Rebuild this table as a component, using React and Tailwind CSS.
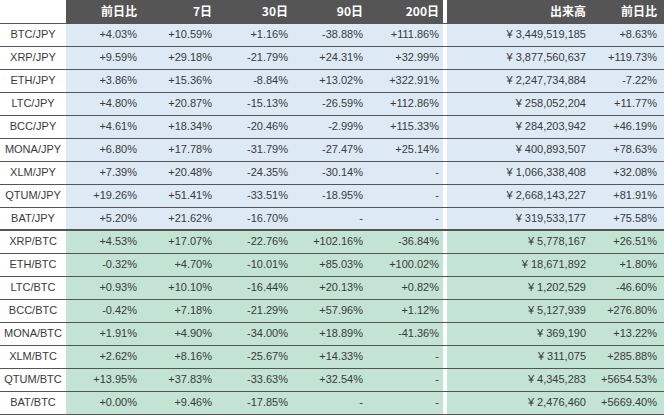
import React from 'react';

const jpyRows = [
  ['BTC/JPY', '+4.03%', '+10.59%', '+1.16%', '-38.88%', '+111.86%', '¥ 3,449,519,185', '+8.63%'],
  ['XRP/JPY', '+9.59%', '+29.18%', '-21.79%', '+24.31%', '+32.99%', '¥ 3,877,560,637', '+119.73%'],
  ['ETH/JPY', '+3.86%', '+15.36%', '-8.84%', '+13.02%', '+322.91%', '¥ 2,247,734,884', '-7.22%'],
  ['LTC/JPY', '+4.80%', '+20.87%', '-15.13%', '-26.59%', '+112.86%', '¥ 258,052,204', '+11.77%'],
  ['BCC/JPY', '+4.61%', '+18.34%', '-20.46%', '-2.99%', '+115.33%', '¥ 284,203,942', '+46.19%'],
  ['MONA/JPY', '+6.80%', '+17.78%', '-31.79%', '-27.47%', '+25.14%', '¥ 400,893,507', '+78.63%'],
  ['XLM/JPY', '+7.39%', '+20.48%', '-24.35%', '-30.14%', '-', '¥ 1,066,338,408', '+32.08%'],
  ['QTUM/JPY', '+19.26%', '+51.41%', '-33.51%', '-18.95%', '-', '¥ 2,668,143,227', '+81.91%'],
  ['BAT/JPY', '+5.20%', '+21.62%', '-16.70%', '-', '-', '¥ 319,533,177', '+75.58%'],
];

const btcRows = [
  ['XRP/BTC', '+4.53%', '+17.07%', '-22.76%', '+102.16%', '-36.84%', '¥ 5,778,167', '+26.51%'],
  ['ETH/BTC', '-0.32%', '+4.70%', '-10.01%', '+85.03%', '+100.02%', '¥ 18,671,892', '+1.80%'],
  ['LTC/BTC', '+0.93%', '+10.10%', '-16.44%', '+20.13%', '+0.82%', '¥ 1,202,529', '-46.60%'],
  ['BCC/BTC', '-0.42%', '+7.18%', '-21.29%', '+57.96%', '+1.12%', '¥ 5,127,939', '+276.80%'],
  ['MONA/BTC', '+1.91%', '+4.90%', '-34.00%', '+18.89%', '-41.36%', '¥ 369,190', '+13.22%'],
  ['XLM/BTC', '+2.62%', '+8.16%', '-25.67%', '+14.33%', '-', '¥ 311,075', '+285.88%'],
  ['QTUM/BTC', '+13.95%', '+37.83%', '-33.63%', '+32.54%', '-', '¥ 4,345,283', '+5654.53%'],
  ['BAT/BTC', '+0.00%', '+9.46%', '-17.85%', '-', '-', '¥ 2,476,460', '+5669.40%'],
];

const headers = ['前日比', '7日', '30日', '90日', '200日'];

function Row({ row, bg, last }) {
  const [pair, d1, d7, d30, d90, d200, vol, volChg] = row;
  const cell = `${bg} h-[23px] p-0 text-right align-middle`;
  return (
    <tr className={last ? 'border-b-2 border-[#555]' : 'border-b border-[#555]'}>
      <td className="h-[23px] p-0 bg-white text-center align-middle">{pair}</td>
      {[d1, d7, d30, d90, d200].map((v, i) => (
        <td key={i} className={`${cell} pr-[4px]`}>{v}</td>
      ))}
      <td className="bg-white p-0" />
      <td className={`${cell} pr-[5px]`}>{vol}</td>
      <td className={`${cell} pr-[7px]`}>{volChg}</td>
    </tr>
  );
}

export default function App() {
  return (
    <div className="w-[664px] h-[415px] bg-white overflow-hidden">
      <table
        className="w-[664px] table-fixed border-collapse text-[11px] leading-none text-[#3a3a3a]"
        style={{ fontFamily: '"Liberation Sans", "Noto Sans CJK JP", sans-serif' }}
      >
        <colgroup>
          <col className="w-[66px]" />
          <col className="w-[75px]" />
          <col className="w-[75px]" />
          <col className="w-[76px]" />
          <col className="w-[75px]" />
          <col className="w-[76px]" />
          <col className="w-[4px]" />
          <col className="w-[144px]" />
          <col className="w-[73px]" />
        </colgroup>
        <thead>
          <tr className="border-b border-[#555] text-[12px] font-bold text-white">
            <th className="h-[23px] p-0 bg-white" />
            {headers.map((h) => (
              <th
                key={h}
                className="h-[23px] p-0 pr-[4px] bg-[#555555] text-right align-middle font-bold"
                style={{ fontFamily: '"Noto Sans CJK JP", sans-serif' }}
              >
                {h}
              </th>
            ))}
            <th className="bg-white p-0" />
            <th
              className="h-[23px] p-0 pr-[5px] bg-[#555555] text-right align-middle font-bold"
              style={{ fontFamily: '"Noto Sans CJK JP", sans-serif' }}
            >
              出来高
            </th>
            <th
              className="h-[23px] p-0 pr-[7px] bg-[#555555] text-right align-middle font-bold"
              style={{ fontFamily: '"Noto Sans CJK JP", sans-serif' }}
            >
              前日比
            </th>
          </tr>
        </thead>
        <tbody>
          {jpyRows.map((r, i) => (
            <Row key={r[0]} row={r} bg="bg-[#dde9f5]" last={i === jpyRows.length - 1} />
          ))}
          {btcRows.map((r) => (
            <Row key={r[0]} row={r} bg="bg-[#c3e3d4]" />
          ))}
        </tbody>
      </table>
    </div>
  );
}
